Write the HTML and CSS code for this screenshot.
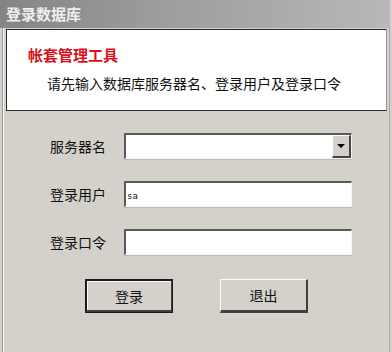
FILE: index.html
```html
<!DOCTYPE html>
<html lang="zh-CN">
<head>
<meta charset="utf-8">
<title>登录数据库</title>
<link rel="stylesheet" href="styles.css">
</head>
<body>
<div class="window">
  <div class="titlebar">登录数据库</div>
  <div class="frame">
    <div class="panel">
      <div class="panel-title">帐套管理工具</div>
      <div class="panel-text">请先输入数据库服务器名、登录用户及登录口令</div>
    </div>
    <div class="form">
      <div class="label">服务器名</div>
      <div class="combo">
        <div class="combo-value"></div>
        <div class="combo-btn"><span class="arrow"></span></div>
      </div>
      <div class="label">登录用户</div>
      <div class="field"><span class="field-text">sa</span></div>
      <div class="label">登录口令</div>
      <div class="field"></div>
    </div>
    <div class="buttons">
      <div class="btn btn-default">登录</div>
      <div class="btn">退出</div>
    </div>
  </div>
</div>
</body>
</html>
```

FILE: styles.css
```css
html, body {
  margin: 0;
  padding: 0;
  background: #d4d1ca;
}
body {
  font-family: "Noto Sans CJK SC", "Liberation Sans", sans-serif;
  color: #000;
}
.window {
  width: 392px;
  height: 352px;
  box-sizing: border-box;
  background: #d4d1ca;
  display: flex;
  flex-direction: column;
  overflow: hidden;
}
.titlebar {
  height: 28px;
  margin-right: 2px;
  box-sizing: border-box;
  padding-left: 6px;
  background: linear-gradient(to right, #848484, #9c9c9c 40%, #b8b8b8);
  color: #efefef;
  font-weight: bold;
  font-size: 15px;
  line-height: 28px;
}
.frame {
  flex: 1;
  margin-left: 2px;
  margin-right: 2px;
  border-left: 1px solid #9b9b9b;
  border-right: 1px solid #a8a8a8;
  box-shadow: inset 1px 0 #fafafa;
  display: flex;
  flex-direction: column;
}
.panel {
  margin: 1px 2px 0 3px;
  height: 82px;
  box-sizing: border-box;
  background: #fff;
  border-top: 1px solid #2a2a2a;
  border-left: 1px solid #2a2a2a;
  border-bottom: 1px solid #2a2a2a;
  border-right: 1px solid #9a9a9a;
}
.panel-title {
  margin: 15px 0 0 21px;
  font-size: 15px;
  line-height: 20px;
  font-weight: bold;
  color: #d8121a;
}
.panel-text {
  margin: 8px 0 0 40px;
  font-size: 14px;
  line-height: 20px;
  color: #111;
}
.form {
  margin: 22px 0 0 47px;
  display: grid;
  grid-template-columns: 74px 228px;
  row-gap: 22px;
  align-items: center;
}
.label {
  font-size: 14px;
  line-height: 26px;
  color: #111;
}
.combo, .field {
  height: 26px;
  box-sizing: border-box;
  background: #fff;
  border-top: 2px solid #5a5a5a;
  border-left: 2px solid #5a5a5a;
  border-bottom: 1px solid #f4f4f4;
  border-right: 1px solid #f4f4f4;
  box-shadow: 0 1px 0 #bdbab3;
}
.combo {
  display: flex;
  justify-content: flex-end;
}
.combo-btn {
  width: 19px;
  height: 23px;
  box-sizing: border-box;
  background: #d4d1ca;
  border-top: 1px solid #fdfdfd;
  border-left: 1px solid #fdfdfd;
  border-right: 2px solid #454545;
  border-bottom: 2px solid #454545;
  display: flex;
  align-items: center;
  justify-content: center;
}
.arrow {
  width: 0;
  height: 0;
  border-left: 4px solid transparent;
  border-right: 4px solid transparent;
  border-top: 4px solid #000;
}
.field {
  display: flex;
  align-items: center;
  padding-left: 1px;
}
.field-text {
  font-family: "DejaVu Sans Mono", monospace;
  font-size: 9px;
  color: #111;
  margin-top: 2px;
}
.buttons {
  margin: 24px 0 0 82px;
  display: flex;
  gap: 47px;
}
.btn {
  width: 88px;
  height: 34px;
  box-sizing: border-box;
  background: #d4d1ca;
  border-top: 1px solid #fdfdfd;
  border-left: 1px solid #fdfdfd;
  border-right: 2px solid #404040;
  border-bottom: 3px solid #404040;
  display: flex;
  align-items: center;
  justify-content: center;
  font-size: 14px;
  color: #111;
}
.btn-default {
  outline: 1px solid #1a1a1a;
  outline-offset: -1px;
  border-top: 2px solid #1a1a1a;
  border-left: 2px solid #1a1a1a;
  box-shadow: inset 1px 1px #fdfdfd;
}
```
